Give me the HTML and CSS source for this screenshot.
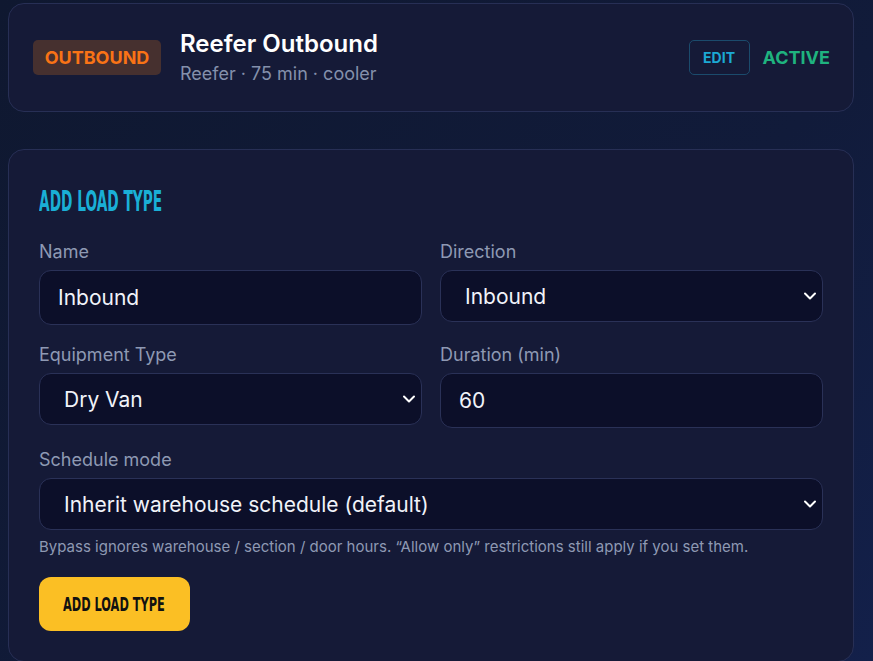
FILE: index.html
```html
<!DOCTYPE html>
<html lang="en">
<head>
  <meta charset="UTF-8">
  <title>Load Types</title>
  <link rel="stylesheet" href="styles.css">
</head>
<body>

<div class="page">

  <div class="card load-row">
    <span class="badge outbound">OUTBOUND</span>
    <div class="load-info">
      <div class="load-name">Reefer Outbound</div>
      <div class="load-meta">Reefer · 75 min · cooler</div>
    </div>
    <div class="load-actions">
      <button class="edit-btn">EDIT</button>
      <span class="status active">ACTIVE</span>
    </div>
  </div>

  <div class="card form-card">
    <h2 class="section-title"><span>ADD LOAD TYPE</span></h2>

    <div class="form-grid">
      <label class="field">
        <span class="field-label">Name</span>
        <input class="text-input" type="text" value="Inbound">
      </label>
      <label class="field">
        <span class="field-label">Direction</span>
        <span class="select-wrap">
          <select class="select-input">
            <option>Inbound</option>
            <option>Outbound</option>
          </select>
          <svg class="chevron" viewBox="0 0 14 8" width="14" height="8"><path d="M2 1.5 L7 6.5 L12 1.5" fill="none" stroke="#fff" stroke-width="2" stroke-linecap="round" stroke-linejoin="round"/></svg>
        </span>
      </label>
      <label class="field">
        <span class="field-label">Equipment Type</span>
        <span class="select-wrap">
          <select class="select-input">
            <option>Dry Van</option>
            <option>Reefer</option>
            <option>Flatbed</option>
          </select>
          <svg class="chevron" viewBox="0 0 14 8" width="14" height="8"><path d="M2 1.5 L7 6.5 L12 1.5" fill="none" stroke="#fff" stroke-width="2" stroke-linecap="round" stroke-linejoin="round"/></svg>
        </span>
      </label>
      <label class="field">
        <span class="field-label">Duration (min)</span>
        <input class="text-input" type="text" value="60">
      </label>
      <label class="field wide">
        <span class="field-label">Schedule mode</span>
        <span class="select-wrap">
          <select class="select-input">
            <option>Inherit warehouse schedule (default)</option>
            <option>Bypass schedule</option>
          </select>
          <svg class="chevron" viewBox="0 0 14 8" width="14" height="8"><path d="M2 1.5 L7 6.5 L12 1.5" fill="none" stroke="#fff" stroke-width="2" stroke-linecap="round" stroke-linejoin="round"/></svg>
        </span>
        <span class="hint">Bypass ignores warehouse / section / door hours. “Allow only” restrictions still apply if you set them.</span>
      </label>
    </div>

    <button class="primary-btn"><span>ADD LOAD TYPE</span></button>
  </div>

</div>

</body>
</html>
```

FILE: styles.css
```css
body {
  margin: 0;
  font-family: Inter, "Noto Sans", sans-serif;
  background: linear-gradient(135deg, #0f1830 0%, #111b3a 60%, #13204a 100%);
  color: #e8ecf5;
  min-height: 100vh;
}

.page { padding: 3px 19px 0 8px; }

.card {
  background: #151a37;
  border: 1px solid #272f55;
  border-radius: 16px;
}

.load-row {
  display: flex;
  align-items: center;
  height: 107px;
  padding: 0 23px 0 24px;
}

.badge {
  display: inline-flex;
  align-items: center;
  justify-content: center;
  width: 128px;
  height: 35px;
  border-radius: 5px;
  font-size: 18px;
  font-weight: 700;
}
.outbound { background: #46302f; color: #f97316; }

.load-info { margin-left: 19px; flex: 1; }
.load-name { font-size: 24px; font-weight: 600; color: #fff; line-height: 28px; }
.load-meta { font-size: 18px; color: #8490ab; line-height: 22px; margin-top: 5px; }

.load-actions { display: flex; align-items: center; gap: 13px; }
.edit-btn {
  width: 61px;
  height: 35px;
  background: transparent;
  border: 1px solid #1b4b6c;
  border-radius: 5px;
  color: #1ca9d4;
  font-family: Inter, sans-serif;
  font-weight: 700;
  font-size: 14px;
}
.status { font-size: 18px; font-weight: 700; }
.active { color: #1fb37f; }

.form-card {
  margin-top: 37px;
  padding: 30px 30px 30px;
}

.section-title {
  margin: 6px 0 23px;
  height: 32px;
  font-family: "DejaVu Sans Condensed", "DejaVu Sans", sans-serif;
  font-weight: 700;
  font-size: 28px;
  line-height: 32px;
  color: #1aafd6;
}
.section-title span { display: inline-block; transform: scaleX(0.545); transform-origin: left center; white-space: nowrap; }

.form-grid {
  display: grid;
  grid-template-columns: 1fr 1fr;
  column-gap: 18px;
  row-gap: 19px;
}
.field { display: flex; flex-direction: column; }
.wide { grid-column: 1 / span 2; margin-top: 2px; }

.field-label {
  font-size: 18px;
  line-height: 22px;
  color: #8e99b3;
  margin-bottom: 7px;
}

.text-input, .select-input {
  box-sizing: border-box;
  width: 100%;
  background: #0c0f29;
  border: 1px solid #2a3157;
  border-radius: 12px;
  color: #f1f3f9;
  font-family: Inter, sans-serif;
  font-size: 21px;
  outline: none;
}
.text-input { height: 55px; padding: 0 18px; }

.select-wrap { position: relative; display: block; }
.select-input {
  height: 52px;
  padding: 0 40px 0 24px;
  appearance: none;
  -webkit-appearance: none;
}
.chevron { position: absolute; right: 6px; top: 22px; pointer-events: none; }

.hint {
  margin-top: 7px;
  font-size: 15px;
  line-height: 20px;
  color: #8e99b3;
}

.primary-btn {
  margin-top: 20px;
  width: 151px;
  height: 54px;
  background: #fbbf24;
  border: none;
  border-radius: 12px;
  color: #111;
  font-family: "DejaVu Sans Condensed", "DejaVu Sans", sans-serif;
  font-weight: 700;
  font-size: 20px;
  text-align: left;
  padding: 0 0 0 24px;
}
.primary-btn span { display: inline-block; transform: scaleX(0.63); transform-origin: left center; white-space: nowrap; }
```
